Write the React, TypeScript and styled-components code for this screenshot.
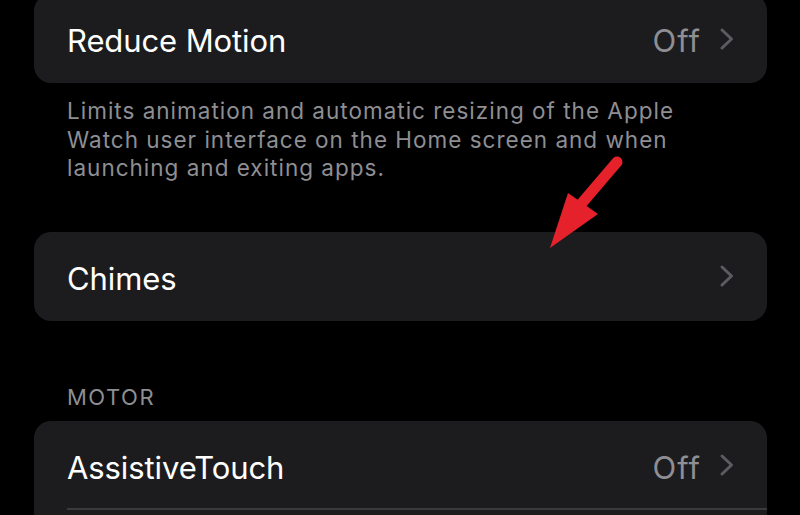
import styled, { createGlobalStyle } from 'styled-components'

const GlobalStyle = createGlobalStyle`
  html, body {
    margin: 0;
    padding: 0;
    background: #000;
  }
  body {
    width: 800px;
    height: 515px;
    overflow: hidden;
    font-family: Inter, "Noto Sans", "Liberation Sans", sans-serif;
    -webkit-font-smoothing: antialiased;
  }
`

const Chevron = () => (
  <svg width='16' height='24' viewBox='0 0 16 24' fill='none'>
    <path
      d='M3 3 L12.5 12 L3 21'
      stroke='#5c5c60'
      strokeWidth='3'
      strokeLinecap='round'
      strokeLinejoin='round'
    />
  </svg>
)

const Arrow = () => (
  <ArrowSvg width='90' height='110' viewBox='0 0 90 110'>
    <line x1='77' y1='22' x2='36' y2='70' stroke='#e5222b' strokeWidth='11' strokeLinecap='round' />
    <polygon points='28,53 58,74 10,108' fill='#e5222b' />
  </ArrowSvg>
)

export default function App() {
  return (
    <>
      <GlobalStyle />
      <Screen>
        <Card $top={-6}>
          <Row>
            <Label>Reduce Motion</Label>
            <Detail>
              <Value>Off</Value>
              <Chevron />
            </Detail>
          </Row>
        </Card>
        <Footer>
          Limits animation and automatic resizing of the Apple
          <br />
          Watch user interface on the Home screen and when
          <br />
          launching and exiting apps.
        </Footer>
        <Card $top={49}>
          <Row>
            <Label>Chimes</Label>
            <Detail>
              <Chevron />
            </Detail>
          </Row>
        </Card>
        <SectionHeader>MOTOR</SectionHeader>
        <Card $top={0} $tail={40}>
          <Row $divider>
            <Label>AssistiveTouch</Label>
            <Detail>
              <Value>Off</Value>
              <Chevron />
            </Detail>
          </Row>
        </Card>
        <Arrow />
      </Screen>
    </>
  )
}

const Screen = styled.div`
  position: relative;
  width: 800px;
  height: 515px;
  overflow: hidden;
  padding: 0 33px 0 34px;
  box-sizing: border-box;
  display: flex;
  flex-direction: column;
`

const Card = styled.div<{ $top: number; $tail?: number }>`
  margin-top: ${(p) => p.$top}px;
  padding-bottom: ${(p) => p.$tail ?? 0}px;
  background: #1c1c1e;
  border-radius: 17px;
  overflow: hidden;
  flex-shrink: 0;
`

const Row = styled.div<{ $divider?: boolean }>`
  height: 89px;
  display: flex;
  align-items: center;
  justify-content: space-between;
  padding: 0 33px;
  box-sizing: border-box;
  position: relative;
  ${(p) =>
    p.$divider &&
    `
    &::after {
      content: '';
      position: absolute;
      left: 33px;
      right: 0;
      bottom: 0;
      height: 2px;
      background: #3a3a3c;
    }
  `}
`

const Label = styled.span`
  color: #fff;
  font-size: 31px;
  letter-spacing: -0.1px;
  line-height: 1;
  margin-top: 4px;
`

const Detail = styled.div`
  display: flex;
  align-items: center;
  gap: 18px;
  margin-right: -1px;
`

const Value = styled.span`
  color: #8e8e93;
  font-size: 31px;
  letter-spacing: 1px;
  line-height: 1;
  margin-top: 4px;
`

const Footer = styled.div`
  color: #8e8e93;
  font-size: 22.5px;
  letter-spacing: 1px;
  line-height: 28.5px;
  padding: 14px 33px 0;
`

const SectionHeader = styled.div`
  color: #8e8e93;
  font-size: 22px;
  letter-spacing: 1.5px;
  line-height: 24px;
  padding: 0 33px;
  margin: 64px 0 12px;
`

const ArrowSvg = styled.svg`
  position: absolute;
  left: 540px;
  top: 140px;
`
